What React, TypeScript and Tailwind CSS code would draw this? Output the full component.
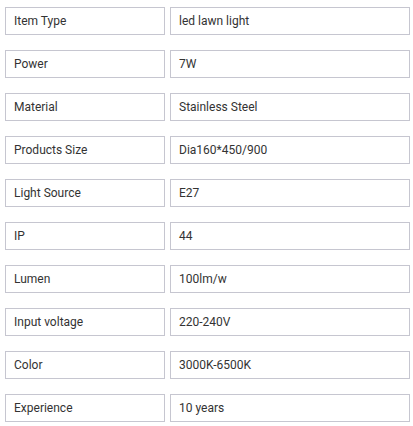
const rows: [string, string][] = [
  ["Item Type", "led lawn light"],
  ["Power", "7W"],
  ["Material", "Stainless Steel"],
  ["Products Size", "Dia160*450/900"],
  ["Light Source", "E27"],
  ["IP", "44"],
  ["Lumen", "100lm/w"],
  ["Input voltage", "220-240V"],
  ["Color", "3000K-6500K"],
  ["Experience", "10 years"],
];

export default function App() {
  return (
    <div className="flex w-[413px] flex-col gap-[15px] bg-white pl-[5px] pt-[7px] font-['Roboto',sans-serif] text-[12px] text-[#333]">
      {rows.map(([label, value]) => (
        <div key={label} className="flex gap-[5px]">
          <div className="flex h-[28px] w-[160px] items-center border border-[#c6c6d0] px-[8px]">{label}</div>
          <div className="flex h-[28px] w-[240px] items-center border border-[#c6c6d0] px-[8px]">{value}</div>
        </div>
      ))}
    </div>
  );
}
